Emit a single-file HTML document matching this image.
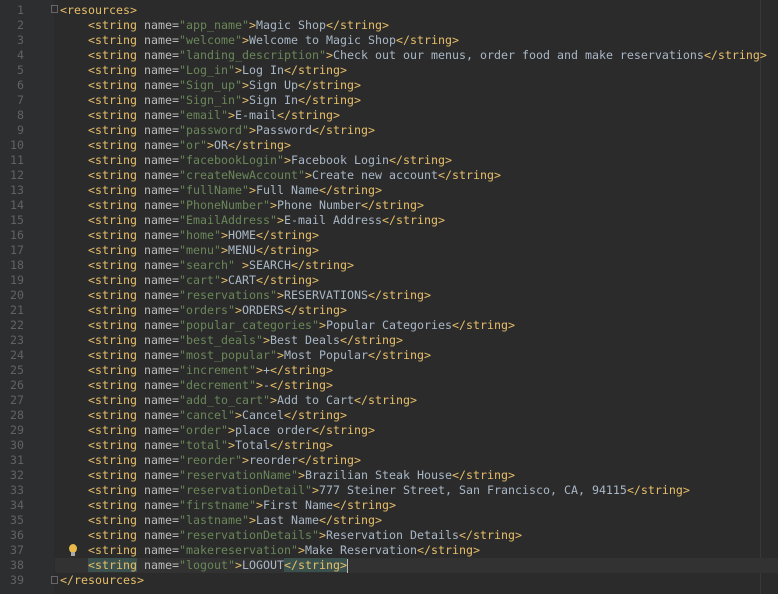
<!DOCTYPE html>
<html><head><meta charset="utf-8"><style>
html,body{margin:0;padding:0;background:#2b2b2b;width:778px;height:594px;overflow:hidden}
#g{position:absolute;left:0;top:0;width:54px;height:594px;background:#2d2e2f}
#rm{position:absolute;left:760px;top:0;width:1px;height:594px;background:#383838}
.ln{position:absolute;left:0;width:24px;text-align:right;color:#606366;font:11.6px "DejaVu Sans Mono",monospace;line-height:15px}
.l{position:absolute;left:60px;white-space:pre;font:11.63px "DejaVu Sans Mono","Liberation Mono",monospace;line-height:15px;color:#a9b7c6}
.t{color:#e8bf6a}.a{color:#bababa}.v{color:#6a8759}
.hl{position:absolute;left:55px;width:723px;height:15px;background:#323232}
.m{background:#3b514d}
</style></head><body>
<div id="g"></div><div id="rm"></div>
<div class="hl" style="top:558px"></div>
<div id="c"></div>
<script>
var lines=[["app_name","Magic Shop"],["welcome","Welcome to Magic Shop"],["landing_description","Check out our menus, order food and make reservations"],["Log_in","Log In"],["Sign_up","Sign Up"],["Sign_in","Sign In"],["email","E-mail"],["password","Password"],["or","OR"],["facebookLogin","Facebook Login"],["createNewAccount","Create new account"],["fullName","Full Name"],["PhoneNumber","Phone Number"],["EmailAddress","E-mail Address"],["home","HOME"],["menu","MENU"],["search","SEARCH",1],["cart","CART"],["reservations","RESERVATIONS"],["orders","ORDERS"],["popular_categories","Popular Categories"],["best_deals","Best Deals"],["most_popular","Most Popular"],["increment","+"],["decrement","-"],["add_to_cart","Add to Cart"],["cancel","Cancel"],["order","place order"],["total","Total"],["reorder","reorder"],["reservationName","Brazilian Steak House"],["reservationDetail","777 Steiner Street, San Francisco, CA, 94115"],["firstname","First Name"],["lastname","Last Name"],["reservationDetails","Reservation Details"],["makereservation","Make Reservation"],["logout","LOGOUT"]];
var h="";
for(var i=1;i<=39;i++){h+='<div class="ln" style="top:'+(3+15*(i-1))+'px">'+i+'</div>';}
h+='<div class="l" style="top:3px"><span class="t">&lt;resources&gt;</span></div>';
lines.forEach(function(d,k){var n=k+2,last=n==38;
var o=last?'<span class="t m">&lt;string</span>':'<span class="t">&lt;string</span>';
var c=last?'<span class="t m">&lt;/string&gt;</span>':'<span class="t">&lt;/string&gt;</span>';
h+='<div class="l" style="top:'+(3+15*(n-1))+'px">    '+o+' <span class="a">name=</span><span class="v">"'+d[0]+'"</span>'+(d[2]?' ':'')+'<span class="t">&gt;</span>'+d[1]+c+'</div>';});
h+='<div class="l" style="top:573px"><span class="t">&lt;/resources&gt;</span></div>';
h+='<div style="position:absolute;left:347px;top:559px;width:1px;height:14px;background:#bbb"></div>';
h+='<div style="position:absolute;left:51px;top:5px;width:7px;height:8px;border:1px solid #666;box-sizing:border-box"></div>';
h+='<div style="position:absolute;left:51px;top:576px;width:7px;height:8px;border:1px solid #666;box-sizing:border-box"></div>';
h+='<div style="position:absolute;left:69px;top:544px;width:8px;height:9px;border-radius:50%;background:#e8b94a"></div><div style="position:absolute;left:71px;top:552px;width:4px;height:4px;background:#aaa"></div>';
document.getElementById("c").innerHTML=h;
</script>
</body></html>
